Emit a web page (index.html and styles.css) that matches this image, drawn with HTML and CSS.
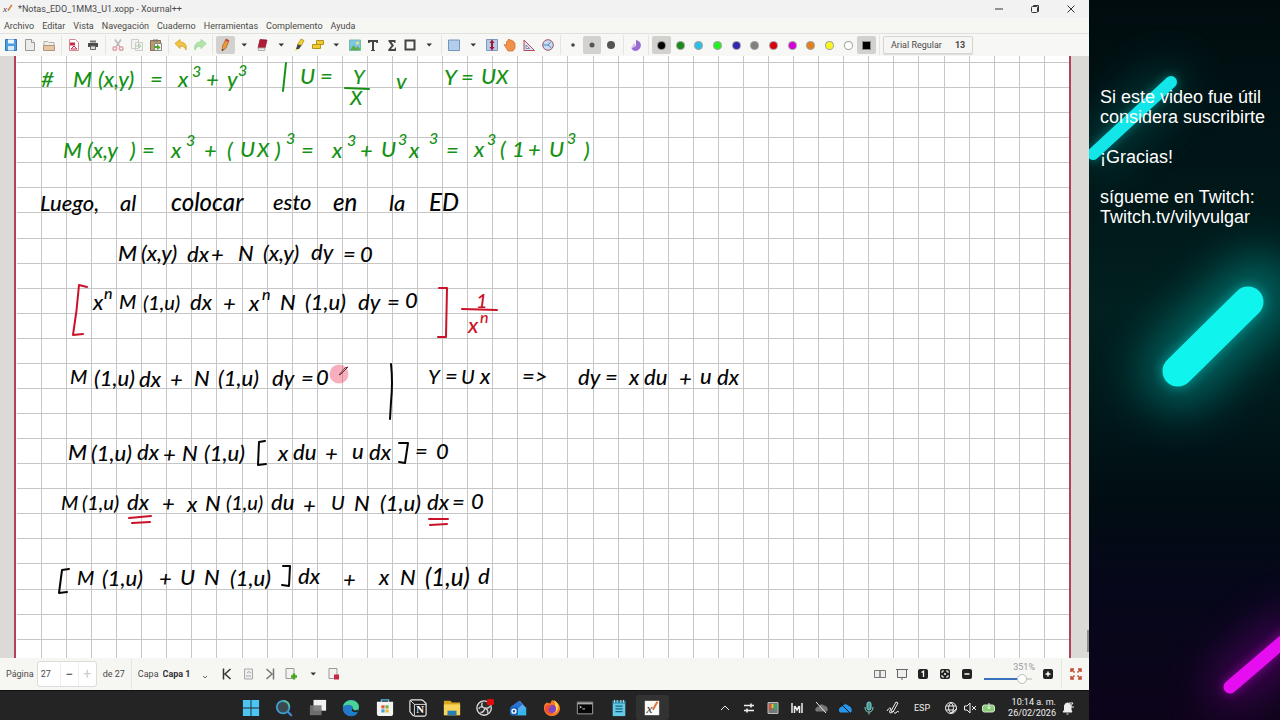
FILE: index.html
```html
<!DOCTYPE html>
<html lang="es">
<head>
<meta charset="utf-8">
<title>*Notas_EDO_1MM3_U1.xopp - Xournal++</title>
<link rel="stylesheet" href="styles.css">
</head>
<body>
<div class="desktop">
<div class="screen">
  <header class="titlebar">
    <svg class="logo" viewBox="0 0 12 12"><text x="0" y="10" class="logo-x">x</text><path d="M6 8 10.500 1" stroke="#e07a2a" stroke-width="2"/></svg>
    <h1 class="title">*Notas_EDO_1MM3_U1.xopp - Xournal++</h1>
    <div class="window-buttons">
      <button aria-label="Minimizar"><svg viewBox="0 0 12 12"><path d="M2 6h8"/></svg></button>
      <button aria-label="Restaurar"><svg viewBox="0 0 12 12"><rect x="2.500" y="3.500" width="6" height="6" rx="1"/><path d="M4.500 3.500v-1h5v6h-1"/></svg></button>
      <button aria-label="Cerrar"><svg viewBox="0 0 12 12"><path d="M2.500 2.500l7 7M9.500 2.500l-7 7"/></svg></button>
    </div>
  </header>
  <nav class="menubar">
    <button>Archivo</button><button>Editar</button><button>Vista</button><button>Navegación</button><button>Cuaderno</button><button>Herramientas</button><button>Complemento</button><button>Ayuda</button>
  </nav>
  <div class="toolbar" role="toolbar">
    <div class="tools n3">
      <button aria-label="Guardar"><svg viewBox="0 0 14 14"><path d="M1.500 1.500h11v11h-11z" fill="#4d9be0" stroke="#2c78bd"/><path d="M4 1.500h6v4H4z" fill="#eef5fb"/><path d="M4 8h6v4.500H4z" fill="#d8e9f7"/></svg></button>
      <button aria-label="Nuevo"><svg viewBox="0 0 14 14"><path d="M2.500 1.500h6l3 3v8h-9z" fill="#ececea" stroke="#999"/><path d="M8.500 1.500v3h3" fill="#fff" stroke="#999"/></svg></button>
      <button aria-label="Abrir"><svg viewBox="0 0 14 14"><path d="M2 3.500h4l1 1h5V8H2z" fill="#eee" stroke="#b5afa8"/><path d="M1.500 7.500h11v5h-11z" fill="#e3c6a3" stroke="#b5967a"/></svg></button>
    </div>
    <i class="sep"></i>
    <div class="tools n2">
      <button aria-label="Exportar PDF"><svg viewBox="0 0 14 14"><path d="M2.500 1.500h6l3 3v8h-9z" fill="#fff" stroke="#cf8a93"/><path d="M3 4.500h5v3H3z" fill="#c92c45"/><path d="m4 11 3-3 3 3z" fill="none" stroke="#c92c45"/></svg></button>
      <button aria-label="Imprimir"><svg viewBox="0 0 14 14"><path d="M4 2.500h6v2H4z" fill="#777"/><path d="M2 5h10v4H2z" fill="#4c4c4c"/><path d="M4.500 8h5v3.500h-5z" fill="#ddd" stroke="#666"/></svg></button>
    </div>
    <i class="sep"></i>
    <div class="tools n3">
      <button aria-label="Cortar"><svg viewBox="0 0 14 14" fill="none"><path d="M4 1.500 9 9M10 1.500 5 9" stroke="#b8b8b8" stroke-width="1.500"/><circle cx="3.800" cy="10.500" r="1.800" stroke="#e0a4ac" stroke-width="1.500"/><circle cx="10.200" cy="10.500" r="1.800" stroke="#e0a4ac" stroke-width="1.500"/></svg></button>
      <button aria-label="Copiar"><svg viewBox="0 0 14 14" fill="#f4f4f2" stroke="#cbccc8"><path d="M1.500 1.500h7v9h-7zM5.500 4.500h7v8h-7z"/><path d="M6 8h4M9 6l2 2-2 2" stroke="#a6cfa1"/></svg></button>
      <button aria-label="Pegar"><svg viewBox="0 0 14 14"><path d="M1.500 2.500h10v10h-10z" fill="#b99a70" stroke="#857052"/><path d="M4 1.500h5v2H4z" fill="#777"/><path d="M5.500 5.500h7v7h-7z" fill="#f3f3f0" stroke="#888"/><path d="M5 8h3V6l3.500 3.500L8 12v-2H5z" fill="#52a532"/></svg></button>
    </div>
    <i class="sep"></i>
    <div class="tools n2">
      <button aria-label="Deshacer"><svg viewBox="0 0 14 14"><path d="M1 5.500 6 1.500v2.500c5 0 7 3 6 8-1-3-3-4-6-4v2.500z" fill="#f1c443" stroke="#d9a93a"/></svg></button>
      <button aria-label="Rehacer"><svg viewBox="0 0 14 14"><path d="M13 5.500 8 1.500v2.500c-5 0-7 3-6 8 1-3 3-4 6-4v2.500z" fill="#b4e6ac" stroke="#9fd698"/></svg></button>
    </div>
    <i class="sep"></i>
    <div class="tools n12">
      <button class="on" aria-label="Lápiz"><svg viewBox="0 0 14 14"><path d="M4.500 8 8 1l3 1.500L8 10l-4 3z" fill="#ee9a3d" stroke="#a76220" stroke-width=".8"/><path d="m8 1 3 1.500-.6 1.500L7.200 2.600z" fill="#cf3c4b"/><path d="m4 13 .2-2 1.600.8z" fill="#333"/></svg></button>
      <button aria-label="Opciones de lápiz"><svg viewBox="0 0 14 14"><path d="M4.500 5.500h5.500L7.250 8.500z" fill="#333"/></svg></button>
      <button aria-label="Borrador"><svg viewBox="0 0 14 14"><path d="m5 1.500 7 .5-2 8H3z" fill="#b01c35" stroke="#8a1026" stroke-width=".7"/><path d="M3 10h7l-.5 2.500h-6z" fill="#eee" stroke="#aaa"/></svg></button>
      <button aria-label="Opciones de borrador"><svg viewBox="0 0 14 14"><path d="M4.500 5.500h5.500L7.250 8.500z" fill="#333"/></svg></button>
      <button aria-label="Resaltador"><svg viewBox="0 0 14 14"><path d="m9 1 3 1.500-2.500 5-4-1z" fill="#f4cf32" stroke="#a58a20" stroke-width=".7"/><path d="m5.500 6.500 4 1L7 11H4z" fill="#444"/><path d="M3 13l1-2h3z" fill="#e8da25"/></svg></button>
      <button aria-label="Formas"><svg viewBox="0 0 14 14" fill="#efcb2c" stroke="#b3921d"><path d="M5.500 2.500h7v4h-7zM1.500 6.500h8v4h-8z"/></svg></button>
      <button aria-label="Más formas"><svg viewBox="0 0 14 14"><path d="M4.500 5.500h5.500L7.250 8.500z" fill="#333"/></svg></button>
      <button aria-label="Imagen"><svg viewBox="0 0 14 14"><path d="M1.500 2h11v10.500h-11z" fill="#7cc7e8" stroke="#79b9a7"/><path d="m2 12 3.500-5 2.500 3 2-2 2.500 4z" fill="#5dae48"/><circle cx="9.500" cy="5" r="1.500" fill="#f6e36b"/></svg></button>
      <button aria-label="Texto"><svg viewBox="0 0 14 14"><path d="M2 2h10v3h-1.500l-.5-1H8v8h1v1H5v-1h1V4H4l-.5 1H2z" fill="#444"/></svg></button>
      <button aria-label="Fórmula"><svg viewBox="0 0 14 14"><path d="M3.500 2h7v3H9.500L9 4H6.500L9 7.500 6 11h3.500l.5-1.500h1V13H3.300v-1.500L6.500 7.500 3.500 3.500z" fill="#444"/></svg></button>
      <button aria-label="Rectángulo"><svg viewBox="0 0 14 14"><path d="M2.500 2.500h9v9h-9z" fill="none" stroke="#444" stroke-width="2"/></svg></button>
      <button aria-label="Más dibujos"><svg viewBox="0 0 14 14"><path d="M4.500 5.500h5.500L7.250 8.500z" fill="#333"/></svg></button>
    </div>
    <i class="sep"></i>
    <div class="tools n6">
      <button aria-label="Selección"><svg viewBox="0 0 14 14"><path d="M1.500 2h11v10.500h-11z" fill="#b3cdea" stroke="#7394bd"/></svg></button>
      <button aria-label="Más selección"><svg viewBox="0 0 14 14"><path d="M4.500 5.500h5.500L7.250 8.500z" fill="#333"/></svg></button>
      <button aria-label="Espacio vertical"><svg viewBox="0 0 14 14"><path d="M1.500 1.500h11v11h-11z" fill="#b5cbe8" stroke="#8198be"/><path d="M7 1.500 9.500 5H8v4h1.500L7 12.500 4.500 9H6V5H4.500z" fill="#a31631"/></svg></button>
      <button aria-label="Mano"><svg viewBox="0 0 14 14"><path d="M1 6.500 3.500 7V3.500l1.500-.5V1.500h2v1l1.500-.5.5 1h1.500v1.500L12 5v5l-2 3H5z" fill="#f0924b" stroke="#cf6c28" stroke-width=".7"/></svg></button>
      <button aria-label="Escuadra"><svg viewBox="0 0 14 14"><path d="M2 2v10.500h10.500z" fill="#dbe4f1" stroke="#b64a5c"/><path d="M4 7v3.500h3.500z" fill="#fff" stroke="#7a8dab"/></svg></button>
      <button aria-label="Compás"><svg viewBox="0 0 14 14"><circle cx="7" cy="7" r="5.300" fill="#c5dcf3" stroke="#a85068"/><path d="M2 7h5l3-3.500M7 7l3.500 3" fill="none" stroke="#5b82b3"/></svg></button>
    </div>
    <i class="sep"></i>
    <div class="tools n3">
      <button aria-label="Fino"><svg viewBox="0 0 14 14"><circle cx="7" cy="7" r="1.800" fill="#444"/></svg></button>
      <button class="on" aria-label="Medio"><svg viewBox="0 0 14 14"><circle cx="7" cy="7" r="2.500" fill="#555"/></svg></button>
      <button aria-label="Grueso"><svg viewBox="0 0 14 14"><circle cx="7" cy="7" r="4" fill="#555"/></svg></button>
    </div>
    <i class="sep"></i>
    <div class="tools n1">
      <button aria-label="Relleno"><svg viewBox="0 0 14 14"><path d="M7 2c6 1 6.500 8 1.500 10.500-3 1-5 0-6-2.500L7 8z" fill="#9a6bd0"/><path d="M2 10.500 7 8 5 5z" fill="#d4b8ee"/></svg></button>
    </div>
    <i class="sep"></i>
    <div class="tools n12 colors">
      <button class="on" aria-label="Negro"><i class="dot black"></i></button><button aria-label="Verde"><i class="dot green"></i></button><button aria-label="Celeste"><i class="dot cyan"></i></button><button aria-label="Verde claro"><i class="dot lime"></i></button><button aria-label="Azul"><i class="dot blue"></i></button><button aria-label="Gris"><i class="dot gray"></i></button><button aria-label="Rojo"><i class="dot red"></i></button><button aria-label="Magenta"><i class="dot magenta"></i></button><button aria-label="Naranja"><i class="dot orange"></i></button><button aria-label="Amarillo"><i class="dot yellow"></i></button><button aria-label="Blanco"><i class="dot white"></i></button><button class="on" aria-label="Color actual"><i class="dot black square"></i></button>
    </div>
    <i class="sep"></i>
    <button class="font-button"><span>Arial Regular</span><b>13</b></button>
  </div>

  <main class="canvas">
    <div class="paper">
      <svg class="page">
        <defs>
          <pattern id="cells" x="25" y="6" width="351" height="351" patternUnits="userSpaceOnUse">
            <path fill="none" stroke="#c6c6c6" d="M.5 0v351M25.500 0v351M50.500 0v351M75.500 0v351M100.500 0v351M125.500 0v351M150.500 0v351M175.500 0v351M201.500 0v351M226.500 0v351M251.500 0v351M276.500 0v351M301.500 0v351M326.500 0v351M0 .5h351M0 25.500h351M0 50.500h351M0 75.500h351M0 100.500h351M0 125.500h351M0 150.500h351M0 176.500h351M0 201.500h351M0 226.500h351M0 251.500h351M0 276.500h351M0 301.500h351M0 326.500h351"/>
          </pattern>
        </defs>
        <rect x="1" width="100%" height="100%" fill="url(#cells)"/>
        <g transform="translate(-16 -56)">
          <g class="ink ink-green">
            <text x="41" y="87">#</text><text x="73" y="87">M</text><text x="98" y="87">(x,y)</text><text x="150" y="87">=</text><text x="178" y="87">x</text><text class="sup" x="192" y="77">3</text><text x="206" y="87">+</text><text x="227" y="87">y</text><text class="sup" x="238" y="76">3</text>
            <text x="300" y="84">U</text><text x="320" y="84">=</text><text class="mid" x="353" y="84">Y</text><text class="mid" x="350" y="105">X</text><text x="396" y="89">v</text><text x="444" y="85">Y</text><text x="461" y="85">=</text><text x="481" y="84">U</text><text class="mid" x="496" y="84">X</text>
            <path d="M286 63 283 91M345 88l24 1"/>
            <text x="63" y="158">M</text><text x="87" y="158">(x,y</text><text x="130" y="158">)</text><text x="142" y="158">=</text><text x="171" y="158">x</text><text class="sup" x="186" y="146">3</text><text x="204" y="158">+</text><text x="227" y="158">(</text><text x="240" y="157">U</text><text class="mid" x="257" y="157">X</text><text x="275" y="158">)</text><text class="sup" x="286" y="144">3</text><text x="301" y="158">=</text><text x="332" y="158">x</text><text class="sup" x="347" y="146">3</text><text x="360" y="158">+</text><text x="381" y="157">U</text><text class="sup" x="398" y="145">3</text><text x="409" y="158">x</text><text class="sup" x="429" y="144">3</text><text x="446" y="158">=</text><text x="474" y="157">x</text><text class="sup" x="487" y="145">3</text><text x="500" y="157">(</text><text x="512" y="157">1</text><text x="528" y="157">+</text><text x="549" y="157">U</text><text class="sup" x="567" y="144">3</text><text x="584" y="158">)</text>
          </g>
          <g class="ink ink-black">
            <text x="40" y="211">Luego,</text><text x="120" y="211">al</text><text x="171" y="211" class="big">colocar</text><text x="273" y="210">esto</text><text x="333" y="211" class="big">en</text><text x="389" y="211">la</text><text x="429" y="211" class="big">ED</text>
            <text x="118" y="261">M</text><text x="141" y="261">(x,y)</text><text x="187" y="262">dx</text><text x="211" y="262">+</text><text x="238" y="261">N</text><text x="263" y="261">(x,y)</text><text x="311" y="260">dy</text><text x="343" y="262">=</text><text x="360" y="262">0</text>
            <text x="93" y="310">x</text><text class="sup" x="104" y="299">n</text><text class="mid" x="119" y="309">M</text><text class="mid" x="143" y="310">(1,u)</text><text x="190" y="310">dx</text><text x="223" y="311">+</text><text x="249" y="311">x</text><text class="sup" x="262" y="300">n</text><text x="280" y="310">N</text><text x="305" y="310">(1,u)</text><text x="358" y="310">dy</text><text x="387" y="310">=</text><text x="405" y="308">0</text>
            <text class="mid" x="70" y="384">M</text><text x="94" y="386">(1,u)</text><text x="139" y="387">dx</text><text x="170" y="387">+</text><text x="194" y="386">N</text><text x="218" y="386">(1,u)</text><text x="272" y="386">dy</text><text x="301" y="386">=</text><text x="316" y="385">0</text>
            <text class="mid" x="428" y="384">Y</text><text x="445" y="384">=</text><text class="mid" x="461" y="384">U</text><text x="480" y="384">x</text><text x="522" y="384">=&gt;</text><text x="578" y="385">dy</text><text x="605" y="385">=</text><text x="629" y="385">x</text><text x="644" y="385">du</text><text x="679" y="386">+</text><text x="700" y="384">u</text><text x="717" y="385">dx</text>
            <text x="68" y="460">M</text><text x="91" y="461">(1,u)</text><text x="137" y="460">dx</text><text x="163" y="462">+</text><text x="182" y="461">N</text><text x="204" y="461">(1,u)</text><text x="278" y="461">x</text><text x="293" y="460">du</text><text x="325" y="461">+</text><text x="352" y="459">u</text><text x="369" y="460">dx</text><text x="415" y="459">=</text><text x="436" y="459">0</text>
            <text class="mid" x="61" y="510">M</text><text class="mid" x="82" y="510">(1,u)</text><text x="127" y="510">dx</text><text x="162" y="511">+</text><text x="187" y="512">x</text><text x="205" y="511">N</text><text class="mid" x="226" y="510">(1,u)</text><text x="271" y="510">du</text><text x="303" y="513">+</text><text class="mid" x="331" y="510">U</text><text x="354" y="511">N</text><text x="380" y="511">(1,u)</text><text x="427" y="510">dx</text><text x="452" y="510">=</text><text x="471" y="509">0</text>
            <text class="mid" x="77" y="585">M</text><text x="102" y="586">(1,u)</text><text x="159" y="586">+</text><text x="180" y="585">U</text><text x="204" y="585">N</text><text x="230" y="586">(1,u)</text><text x="298" y="584">dx</text><text x="343" y="587">+</text><text x="379" y="585">x</text><text x="400" y="585">N</text><text class="big" x="425" y="586">(1,u)</text><text x="478" y="584">d</text>
            <path d="M391 364q2 18-0 38l-1 17M265 441l-6 1-1 23 8-1M399 443l9 0-3 20-6-1M69 569l-7 1-3 23 8-1M283 566l7 0-1 20-7-1"/>
          </g>
          <g class="ink ink-red">
            <path d="M87 287l-8-2q-2 26-6 50l10-1M439 288l8 0-1 49-8 0M462 309l35 1M129 518l22-2M132 523l18-1M429 519h19M430 525l17-1"/>
            <text class="mid" x="476" y="308">1</text><text x="468" y="333">x</text><text class="sup" x="480" y="323">n</text>
          </g>
          <circle cx="339" cy="374" r="9.500" fill="#ee3659" opacity=".4"/>
          <path d="m339 375 6-7 3-1-7 7z" fill="#ddd" stroke="#742b3a"/>
        </g>
      </svg>
    </div>
    <i class="scroll-thumb"></i>
  </main>

  <footer class="status">
    <label for="page">Página</label>
    <div class="spin"><input id="page" type="text" value="27"><button aria-label="Restar">−</button><button class="off" aria-label="Sumar">+</button></div>
    <span>de 27</span>
    <i class="sep tall"></i>
    <label for="layer">Capa</label>
    <div class="layer"><select id="layer"><option>Capa 1</option></select><svg viewBox="0 0 8 8"><path d="m2 3 2 2 2-2" fill="none" stroke="#666"/></svg></div>
    <div class="pages">
      <button aria-label="Primera"><svg viewBox="0 0 14 14" fill="none" stroke="#333" stroke-width="1.500"><path d="M3.500 1.500v11M10.500 2 5 7l5.500 5"/></svg></button>
      <button aria-label="Anotada"><svg viewBox="0 0 14 14" fill="#eee" stroke="#aaa"><path d="M2.500 2h8v10h-8z"/><path d="M4 9h5M5 6q2-3 4 0"/></svg></button>
      <button aria-label="Última"><svg viewBox="0 0 14 14" fill="none" stroke="#777" stroke-width="1.500"><path d="M10.500 1.500v11M3.500 2 9 7l-5.500 5"/></svg></button>
      <button aria-label="Insertar página"><svg viewBox="0 0 14 14"><path d="M2 1.500h8v10H2z" fill="#f2f2f0" stroke="#999"/><path d="M7 9.500h6M10 6.500v6" stroke="#46a71d" stroke-width="2.500"/></svg></button>
      <button aria-label="Más páginas"><svg viewBox="0 0 14 14"><path d="M4.500 5.500h5.500L7.250 8.500z" fill="#333"/></svg></button>
      <button aria-label="Eliminar página"><svg viewBox="0 0 14 14"><path d="M2 1.500h8v10H2z" fill="#f2f2f0" stroke="#999"/><path d="M7 7.500h5v5H7z" fill="#c82540"/></svg></button>
    </div>
    <div class="views">
      <button aria-label="Dos páginas"><svg viewBox="0 0 14 14" fill="#eee" stroke="#777"><path d="M1.500 3.500H7v7H1.500zM7 3.500h5.500v7H7z"/></svg></button>
      <button aria-label="Presentación"><svg viewBox="0 0 14 14" fill="#eee" stroke="#666"><path d="M1 2.500h12M2.500 2.500h9v8h-9zM6 12h2"/></svg></button>
      <button aria-label="Tamaño original"><svg viewBox="0 0 14 14"><rect x="2" y="2" width="10" height="10" rx="2" fill="#222"/><path d="m5.500 5.500 2-1.300V10" fill="none" stroke="#fff" stroke-width="1.300"/></svg></button>
      <button aria-label="Ajustar"><svg viewBox="0 0 14 14"><rect x="2" y="2" width="10" height="10" rx="2" fill="#222"/><path d="M4 6V4h2M8 4h2v2M10 8v2H8M6 10H4V8" fill="none" stroke="#fff"/><circle cx="7" cy="7" r="1" fill="#fff"/></svg></button>
      <button aria-label="Alejar"><svg viewBox="0 0 14 14"><rect x="2" y="2" width="10" height="10" rx="2" fill="#222"/><path d="M4.500 7h5" stroke="#fff" stroke-width="1.500"/></svg></button>
    </div>
    <div class="zoom"><label for="zoom">351%</label><input id="zoom" type="range" min="0" max="100" value="88"></div>
    <div class="zoom-in"><button aria-label="Acercar"><svg viewBox="0 0 14 14"><rect x="2" y="2" width="10" height="10" rx="2" fill="#222"/><path d="M4.500 7h5M7 4.500v5" stroke="#fff" stroke-width="1.500"/></svg></button></div>
    <i class="sep tall"></i>
    <div class="full"><button aria-label="Pantalla completa"><svg viewBox="0 0 14 14" fill="none" stroke="#c44a2c" stroke-width="1.500"><path d="M5.500 5.500 2.500 2.500M2 5V2h3M8.500 5.500l3-3M9 2h3v3M8.500 8.500l3 3M12 9v3H9M5.500 8.500l-3 3M2 9v3h3"/></svg></button></div>
  </footer>

  <div class="taskbar">
    <div class="apps">
      <button aria-label="Inicio"><svg viewBox="0 0 20 20" fill="#4cc5f3"><path d="M1 1h8.500v8.500H1zM10.500 1H19v8.500h-8.500zM1 10.500h8.500V19H1zM10.500 10.500H19V19h-8.500z"/></svg></button>
      <button aria-label="Buscar"><svg viewBox="0 0 20 20"><circle cx="9" cy="9" r="7" fill="#3b4a50" stroke="#3f9ed4" stroke-width="2"/><path d="M9 2a7 7 0 0 1 7 7" fill="none" stroke="#59bd93" stroke-width="2"/><path d="m14 14 4 4" stroke="#3c8bd0" stroke-width="2.500" stroke-linecap="round"/></svg></button>
      <button aria-label="Vista de tareas"><svg viewBox="0 0 20 20"><path d="M5 1h14v12H5z" fill="#f1f1f1"/><path d="M1 7h13v11H1z" fill="#777" opacity=".9"/></svg></button>
      <button aria-label="Edge"><svg viewBox="0 0 20 20"><circle cx="10" cy="10" r="9" fill="#1783cf"/><path d="M1 9C2 2 9 0 14 2c6 3 6 9 2 11-2 1-5 0-4-2 1-5-7-6-11-2z" fill="#4bd395"/><path d="M1 9c5-5 12-2 11 2-3-3-6 1-4 4 2 3 6 2 9 1-4 5-14 4-16-4z" fill="#2677c8"/><path d="M12 11c-1 3 3 3 6 2" fill="none" stroke="#242424" stroke-width="2"/></svg></button>
      <button aria-label="Tienda"><svg viewBox="0 0 20 20"><path d="M6 5V1h8v4" fill="none" stroke="#55bce9" stroke-width="1.500"/><path d="M1 3h18v13q0 3-3 3H4q-3 0-3-3z" fill="#f3f3f1"/><path d="M6 7h3.500v3.500H6z" fill="#e25735"/><path d="M10.500 7H14v3.500h-3.500z" fill="#71b345"/><path d="M6 11.500h3.500V15H6z" fill="#3e9fe0"/><path d="M10.500 11.500H14V15h-3.500z" fill="#f0bb35"/></svg></button>
      <button aria-label="Notion"><svg viewBox="0 0 20 20"><path d="M1 3q0-2 2-2h10q2 0 3 1l3 3v12q0 2-2 2H7q-2 0-3-1l-3-4z" fill="#1c1c1c" stroke="#eee" stroke-width="1.300"/><path d="m2 2 4 4v12M6 6h13" fill="none" stroke="#eee"/><text x="8" y="16" class="notion-n">N</text></svg></button>
      <button aria-label="Archivos"><svg viewBox="0 0 20 20"><path d="M1 2h7l2 2h9v14H1z" fill="#d9a51f"/><path d="M1 6h18v12H1z" fill="#f7d45a"/><path d="M5 13h10v5H5z" fill="#267fb7"/></svg></button>
      <button aria-label="OBS"><svg viewBox="0 0 20 20"><circle cx="9" cy="10" r="8" fill="#2c2c2c" stroke="#ddd" stroke-width="1.500"/><path d="M7 4q-2 5 3 6 3 1 6-2M10 10q-1 5-5 5M9 10Q5 7 3 11M9 10q5 1 4 6" fill="none" stroke="#d0d0d0" stroke-width="1.500"/><rect x="12" y="0" width="8" height="7" rx="2" fill="#e10c0c"/></svg></button>
      <button aria-label="Correo"><svg viewBox="0 0 20 20"><path d="M2 9 12 2l7 8v8H3z" fill="#56aef2"/><path d="m2 9 9-7 4 4-9 8z" fill="#2c72d0"/><path d="M8 18 19 9v9z" fill="#30b9e9"/><rect x="1" y="9" width="9" height="9" rx="2" fill="#1761b9"/><circle cx="5.500" cy="13.500" r="2.200" fill="none" stroke="#fff" stroke-width="1.500"/></svg></button>
      <button aria-label="Firefox"><svg viewBox="0 0 20 20"><path d="M4 4 8 5 10 1q8 2 9 9c0 5-4 9-9 9S1 15 1 10q0-4 3-6z" fill="#f77928"/><path d="M12 1q6 4 5 9-1 6-7 6 6-6 2-15z" fill="#ffcf42"/><circle cx="10" cy="11" r="4.500" fill="#8146c4"/><path d="M3 8q4-3 7 0-3 0-4 4 1 4 7 4-8 3-11-4z" fill="#ef4d35"/></svg></button>
      <button aria-label="Terminal"><svg viewBox="0 0 20 20"><path d="M1.500 3.500h17v13h-17z" fill="#050505" stroke="#aaa"/><path d="M2 4h16v2H2z" fill="#aaa"/><path d="m4 8 2 1-2 1M7 11h3" stroke="#ddd" fill="none"/></svg></button>
      <button aria-label="Bloc de notas"><svg viewBox="0 0 20 20"><path d="M3 2h14v17H3z" fill="#65c9e8"/><path d="M3 2h14v3H3z" fill="#2588a8"/><path d="M6 8h8M6 11h8M6 14h8" stroke="#17647e" stroke-width="1.300"/><path d="M5 1v3M8 1v3M12 1v3M15 1v3" stroke="#ddd"/></svg></button>
      <button class="active" aria-label="Xournal++"><svg viewBox="0 0 20 20"><path d="M2 2h16v16H2z" fill="#f9f9f6"/><text x="4" y="15" class="xj">x</text><path d="m11 12 5-9" stroke="#e46c2b" stroke-width="2"/></svg></button>
    </div>
    <div class="tray">
      <button aria-label="Mostrar ocultos"><svg viewBox="0 0 14 14"><path d="m3 9 4-4 4 4" /></svg></button>
      <button aria-label="Ajustes"><svg viewBox="0 0 14 14"><path d="M2 4.500h10M2 9.500h10M9 2.500v4M5 7.500v4" stroke-width="1.600"/></svg></button>
      <button aria-label="PowerToys"><svg viewBox="0 0 14 14"><path d="M2 1.500h10v11H2z" fill="#777" stroke="#bbb"/><path d="M3 3h2v6H3z" fill="#de4b39" stroke="none"/><path d="M5.500 3h2v4h-2z" fill="#e9bf32" stroke="none"/><path d="M8 3h3v6H8z" fill="#38a56a" stroke="none"/></svg></button>
      <button aria-label="Medidor"><svg viewBox="0 0 14 14"><path d="M2 2v10M12 2v10M4.500 5v7M9.500 5v7M5 5l2 4 2-4" stroke-width="1.500"/></svg></button>
      <button aria-label="Nube"><svg viewBox="0 0 14 14"><path d="M2 10q-1-4 3-4 2-4 5-1 4 0 3 5z" fill="#777" stroke="#777"/><path d="m2 1 10 11"/></svg></button>
      <button aria-label="OneDrive"><svg viewBox="0 0 14 14"><path d="M2 11q-2-4 2-5 3-4 6-1 4 1 3 6z" fill="#2697ee" stroke="#2697ee"/><path d="m2 2 10 10" stroke="#111"/></svg></button>
      <button aria-label="Micrófono"><svg viewBox="0 0 14 14"><rect x="5" y="1" width="4" height="8" rx="2" fill="#409b9a" stroke="#80d2ca"/><path d="M3 6q0 5 4 5t4-5M7 11v2.500" stroke="#80d2ca"/></svg></button>
      <button aria-label="Lápiz óptico"><svg viewBox="0 0 14 14"><path d="M1 10q3-5 4-2-3 4 0 4l3-2M5 10l5-9 2 1-5 9zM8 12h2q1-3 3-1"/></svg></button>
      <span class="lang">ESP</span>
      <div class="network">
        <button aria-label="Red"><svg viewBox="0 0 14 14"><circle cx="7" cy="7" r="5.500"/><path d="M2 5h10M2 9h8M7 1.500q-5 5 0 11M7 1.500q5 5 0 11M8 12l4-4"/></svg></button>
        <button aria-label="Silencio"><svg viewBox="0 0 14 14"><path d="M1.500 5H4l3-3v10L4 9H1.500zM9 5l4 4M13 5 9 9"/></svg></button>
        <button aria-label="Batería"><svg viewBox="0 0 14 14"><rect x="0.500" y="4" width="12" height="7" rx="2" fill="#8acb78" stroke="#d4ebce"/><path d="M7 2v5M5.500 6 7 8l1.500-2" /></svg></button>
      </div>
      <div class="clock"><time>10:14 a. m.</time><time>26/02/2026</time></div>
      <button class="bell" aria-label="Notificaciones"><svg viewBox="0 0 14 14"><path d="M2 11h9l-1-2V5Q9 2 6.500 2T3.500 5v4z" fill="#eee"/><path d="M5.500 13h2M8 2h4L9 6h4" /></svg></button>
    </div>
  </div>
</div>

<aside class="banner">
  <svg class="neon" viewBox="0 0 191 720" preserveAspectRatio="xMinYMin slice" fill="none" stroke-linecap="round">
    <defs>
      <filter id="glow" x="-100%" y="-100%" width="300%" height="300%"><feGaussianBlur stdDeviation="24"/></filter>
      <filter id="halo" x="-50%" y="-50%" width="200%" height="200%"><feGaussianBlur stdDeviation="5"/></filter>
    </defs>
    <g filter="url(#glow)" opacity=".6"><path d="m5 153 76-71" stroke="#008a84" stroke-width="22"/><path d="m89 372 80-79" stroke="#009a94" stroke-width="74"/><path d="m141 687 62-53" stroke="#8a00a0" stroke-width="34"/></g>
    <g filter="url(#halo)" opacity=".5"><path d="m4 154 78-72" stroke="#00a8a4" stroke-width="14"/><path d="m89 371 70-69" stroke="#00b0ac" stroke-width="36"/><path d="m141 687 62-53" stroke="#a800b8" stroke-width="17"/></g>
    <path d="m4 154 78-72" stroke="#12e6e8" stroke-width="12"/>
    <path d="m89 371 70-69" stroke="#10f4ee" stroke-width="31"/>
    <path d="m141 687 62-53" stroke="#e60df0" stroke-width="13"/>
  </svg>
  <div class="message">
    <p>Si este video fue útil<br>considera suscribirte</p>
    <p>¡Gracias!</p>
    <p>sígueme en Twitch:<br>Twitch.tv/vilyvulgar</p>
  </div>
</aside>
</div>
</body>
</html>
```
FILE: styles.css
```css
* { box-sizing: border-box; }
body { margin: 0; font-family: Roboto, "Noto Sans", sans-serif; font-size: 9px; line-height: 12px; color: #4a4a4a; }
button, input, select { font: inherit; color: inherit; border: 0; background: none; padding: 0; margin: 0; }
button { display: flex; align-items: center; justify-content: center; }
svg { display: block; }

.desktop { display: flex; min-height: 100vh; background: #000; }
.screen { flex: 1; min-width: 0; display: flex; flex-direction: column; }

.titlebar { height: 18px; flex: none; display: flex; align-items: center; gap: 5px; padding-left: 3px; background: #f2f2f2; }
.logo { width: 10px; height: 12px; overflow: visible; }
.logo-x { font: italic 11px "Liberation Serif", serif; fill: #444; }
.title { margin: 0; font-size: 9px; font-weight: 400; flex: 1; }
.window-buttons { display: flex; }
.window-buttons button { width: 36px; height: 16px; }
.window-buttons svg { width: 12px; height: 12px; fill: none; stroke: #333; }

.menubar { height: 15px; flex: none; display: flex; align-items: center; gap: 8px; padding-left: 4px; background: #f6f6f3; }

.toolbar { height: 23px; flex: none; display: flex; align-items: center; gap: 3px; padding-left: 2px; background: #f7f7f5; border-top: 1px solid #e0e0dd; }
.tools { display: flex; }
.tools button { flex: 1; height: 18px; border-radius: 2px; }
.tools svg { width: 14px; height: 14px; }
.tools .on { background: #d3d1cd; }
.n1 { width: 18px; }
.n2 { width: 37px; }
.n3 { width: 56px; }
.n6 { width: 112px; }
.n12 { width: 222px; }
.colors { width: 224px; }
.sep { width: 1px; height: 20px; background: #e5e5e2; }
.dot { width: 7px; height: 7px; border-radius: 50%; box-shadow: 0 0 0 1px rgba(0, 0, 0, .35); }
.square { border-radius: 0; }
.black { background: #000; }
.green { background: #1b8c1b; }
.cyan { background: #2cc0e6; }
.lime { background: #25ef25; }
.blue { background: #3328b2; }
.gray { background: #808080; }
.red { background: #d8000c; }
.magenta { background: #d800d8; }
.orange { background: #e0801c; }
.yellow { background: #f8f820; }
.white { background: #fff; }
.font-button { height: 18px; gap: 13px; padding: 0 7px; border: 1px solid #d5d5d2; border-radius: 2px; background: #f6f6f4; box-shadow: 0 1px 1px #ddd; }

.canvas { flex: 1; min-height: 0; display: flex; position: relative; padding: 0 18px 0 14px; background: #dcdad6; overflow: hidden; }
.paper { flex: 1; display: flex; border: solid #b0435a; border-width: 0 2px; background: #fff; position: relative; }
.page { position: absolute; inset: 0; width: 100%; height: 100%; }
.ink { font-family: Lato, "Open Sans", sans-serif; font-style: italic; font-size: 22px; stroke-linecap: round; stroke-linejoin: round; stroke-width: 2; }
.ink .sup { font-size: 16px; }
.ink .mid { font-size: 20px; }
.ink .big { font-size: 24px; }
.ink text { stroke-width: 0; font-weight: 500; }
.ink path { fill: none; }
.ink-green { fill: #159215; stroke: #159215; }
.ink-black { fill: #050505; stroke: #050505; }
.ink-red { fill: #cb1228; stroke: #cb1228; }
.scroll-thumb { position: absolute; right: 0; bottom: 6px; width: 2px; height: 22px; background: #8f8f8d; }

.status { height: 32px; flex: none; display: flex; align-items: center; padding-left: 6px; background: #f6f6f3; }
.status svg { width: 14px; height: 14px; }
.spin { display: flex; align-items: center; width: 60px; height: 26px; margin: 0 6px 0 3px; border: 1px solid #dcdcda; border-radius: 3px; background: #fff; }
.spin input { width: 22px; padding-left: 3px; }
.spin button { flex: 1; height: 24px; border-left: 1px solid #eee; font-size: 14px; }
.spin .off { color: #ccc; }
.tall { height: 30px; margin: 0 6px; }
.layer { display: flex; align-items: center; width: 46px; margin-left: 4px; }
.status .layer select { appearance: none; width: 38px; font-weight: 700; color: #333; }
.status .layer svg { width: 8px; height: 8px; flex: none; margin-top: 6px; }
.pages { display: flex; width: 128px; margin-left: 8px; }
.pages button, .views button { flex: 1; }
.views { display: flex; width: 109px; margin-left: auto; }
.zoom { display: flex; flex-direction: column; align-items: flex-end; width: 48px; margin: 0 9px 0 6px; }
.zoom label { color: #999; margin-right: -3px; line-height: 10px; }
.zoom input { appearance: none; width: 48px; height: 14px; }
.zoom input::-webkit-slider-runnable-track { height: 2px; background: linear-gradient(90deg, #3971bd 84%, #d5d5d2 84%); }
.zoom input::-webkit-slider-thumb { appearance: none; width: 10px; height: 10px; margin-top: -4px; border: 1px solid #bbb; border-radius: 50%; background: #fff; }
.full { margin: 0 6px 0 1px; }

.taskbar { height: 30px; flex: none; display: flex; align-items: center; padding: 4px 14px 0 234px; border-top: 1px solid #111; background: #242424; color: #f0f0f0; }
.apps { display: flex; flex: none; width: 435px; }
.apps button { flex: 1; height: 25px; border-radius: 3px; }
.apps svg { width: 18px; height: 18px; }
.apps .active { background: #323232; }
.notion-n { font: 700 12px "Liberation Serif", serif; fill: #fff; }
.xj { font: italic 15px "Liberation Serif", serif; fill: #333; }
.tray { display: flex; align-items: center; margin-left: auto; }
.tray button { width: 24px; }
.tray svg { width: 14px; height: 14px; fill: none; stroke: #eee; }
.lang { width: 34px; text-align: center; font-size: 9px; }
.network { display: flex; margin-left: 2px; }
.network button { width: 19px; }
.clock { display: flex; flex-direction: column; align-items: flex-end; width: 58px; line-height: 11px; }
.tray .bell { width: 14px; margin-left: 5px; }

.banner { flex: none; width: 191px; position: relative; overflow: hidden; background: linear-gradient(#010c0f 0, #011517 22%, #01201f 43%, #01191b 56%, #010d13 70%, #06071a 82%, #0d041a 100%); }
.neon { position: absolute; inset: 0; width: 100%; height: 100%; }
.message { position: relative; padding: 87px 0 0 11px; font-family: "Liberation Sans", Arial, sans-serif; font-size: 18px; line-height: 20px; color: #fff; white-space: nowrap; }
.message p { margin: 0 0 20px; }
```
